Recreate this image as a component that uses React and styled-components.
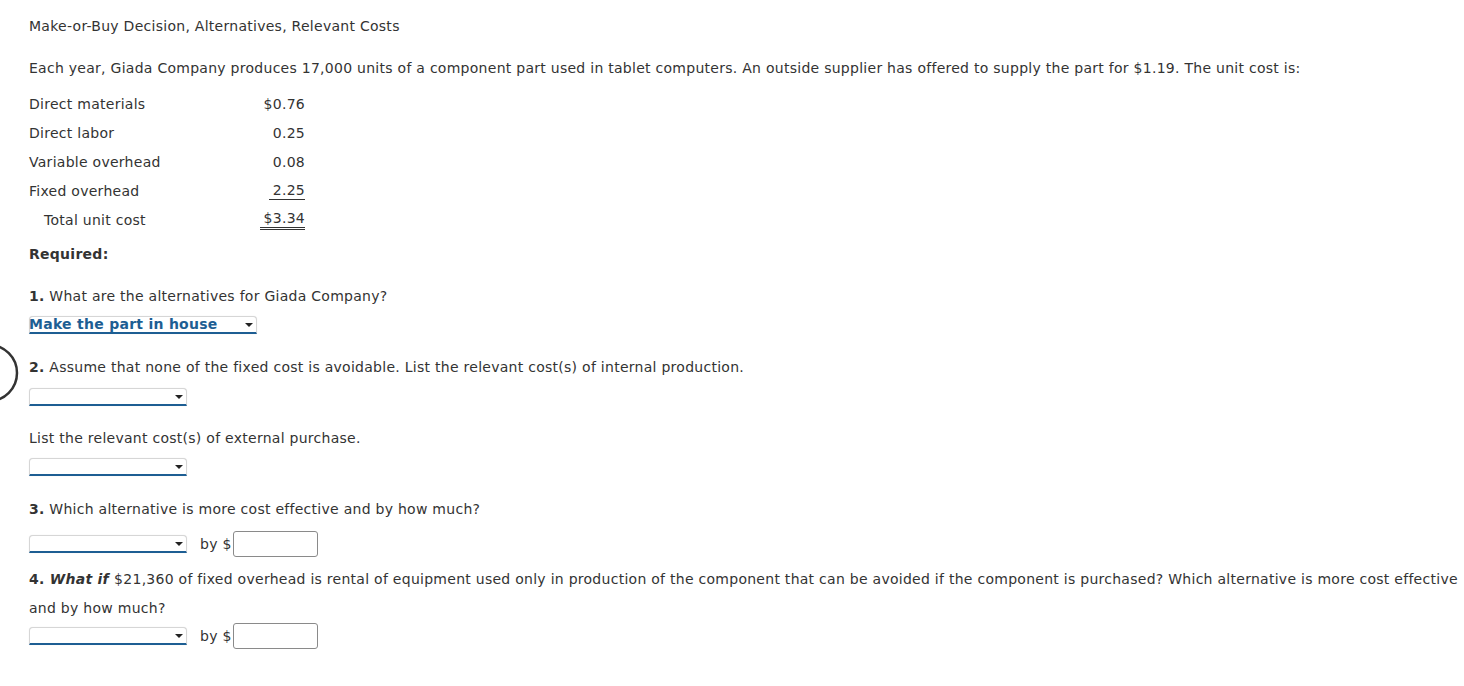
import { createGlobalStyle } from "styled-components";
import styled from "styled-components";

const GlobalStyle = createGlobalStyle`
  body {
    margin: 0;
    background: #fff;
    font-family: "DejaVu Sans", Verdana, sans-serif;
    font-size: 14px;
    letter-spacing: 0.27px;
    color: #333;
  }
`;

const costs = [
  { label: "Direct materials", amount: "$0.76" },
  { label: "Direct labor", amount: "0.25" },
  { label: "Variable overhead", amount: "0.08" },
  { label: "Fixed overhead", amount: "2.25", line: "single" },
  { label: "Total unit cost", amount: "$3.34", line: "double", indent: true },
];

const App = () => {
  return (
    <>
      <GlobalStyle />
      <Page>
        <CursorRing width="22" height="60" viewBox="0 0 22 60">
          <circle cx="-11" cy="28" r="28" fill="none" stroke="#333" strokeWidth="2.5" />
        </CursorRing>

        <Text>Make-or-Buy Decision, Alternatives, Relevant Costs</Text>
        <Text $top={13}>
          Each year, Giada Company produces 17,000 units of a component part used in tablet
          computers. An outside supplier has offered to supply the part for $1.19. The unit cost is:
        </Text>

        <CostTable>
          {costs.map((c) => (
            <CostRow key={c.label}>
              <CostLabel $indent={c.indent}>{c.label}</CostLabel>
              <CostCell>
                <Amount $line={c.line}>{c.amount}</Amount>
              </CostCell>
            </CostRow>
          ))}
        </CostTable>

        <Text $top={6}>
          <b>Required:</b>
        </Text>

        <Text $top={13}>
          <b>1.</b> What are the alternatives for Giada Company?
        </Text>
        <Dropdown $wide $top={5}>
          <DropValue>Make the part in house</DropValue>
          <Caret />
        </Dropdown>

        <Text $top={19}>
          <b>2.</b> Assume that none of the fixed cost is avoidable. List the relevant cost(s) of
          internal production.
        </Text>
        <Dropdown $top={6}>
          <DropValue />
          <Caret />
        </Dropdown>

        <Text $top={18}>List the relevant cost(s) of external purchase.</Text>
        <Dropdown $top={5}>
          <DropValue />
          <Caret />
        </Dropdown>

        <Text $top={19}>
          <b>3.</b> Which alternative is more cost effective and by how much?
        </Text>
        <AnswerRow $top={7}>
          <Dropdown>
            <DropValue />
            <Caret />
          </Dropdown>
          <By>by $</By>
          <AmountInput />
        </AnswerRow>

        <Text $top={8}>
          <b>
            4. <i>What if </i>
          </b>
          $21,360 of fixed overhead is rental of equipment used only in production of the component
          that can be avoided if the component is purchased? Which alternative is more cost effective
          and by how much?
        </Text>
        <AnswerRow $top={0}>
          <Dropdown>
            <DropValue />
            <Caret />
          </Dropdown>
          <By>by $</By>
          <AmountInput />
        </AnswerRow>
      </Page>
    </>
  );
};

export default App;

const Page = styled.div`
  position: relative;
  padding: 12px 0 30px 29px;
`;

const CursorRing = styled.svg`
  position: absolute;
  left: 0;
  top: 345px;
`;

const Text = styled.p`
  margin: ${(p) => p.$top || 0}px 0 0;
  line-height: 29px;
  b {
    font-weight: bold;
  }
`;

const CostTable = styled.div`
  margin-top: 6px;
  display: flex;
  flex-direction: column;
  width: 276px;
`;

const CostRow = styled.div`
  display: grid;
  grid-template-columns: 200px 76px;
  height: 29px;
  align-items: center;
`;

const CostLabel = styled.span`
  padding-left: ${(p) => (p.$indent ? 15 : 0)}px;
`;

const CostCell = styled.span`
  text-align: right;
`;

const Amount = styled.span`
  display: inline-block;
  line-height: 18px;
  padding-left: ${(p) => (p.$line ? 4 : 0)}px;
  border-bottom: ${(p) =>
    p.$line === "double" ? "3px double #333" : p.$line === "single" ? "1px solid #333" : "none"};
`;

const Dropdown = styled.div`
  margin-top: ${(p) => p.$top || 0}px;
  width: ${(p) => (p.$wide ? 228 : 158)}px;
  height: 18px;
  box-sizing: border-box;
  display: flex;
  align-items: center;
  background: #fff;
  border: 1px solid #d6d6d6;
  border-bottom: 2px solid #1d5e93;
  border-radius: 4px 4px 0 0;
  box-shadow: 0 0 1px rgba(0, 0, 0, 0.15);
`;

const DropValue = styled.span`
  flex: 1;
  margin-left: -1px;
  color: #1d5e93;
  font-weight: bold;
  font-size: 14px;
  line-height: 15px;
  white-space: nowrap;
`;

const Caret = styled.span`
  width: 0;
  height: 0;
  margin-right: 3px;
  border-left: 4px solid transparent;
  border-right: 4px solid transparent;
  border-top: 4px solid #222;
`;

const AnswerRow = styled.div`
  margin-top: ${(p) => p.$top || 0}px;
  display: flex;
  align-items: center;
`;

const By = styled.span`
  margin-left: 13px;
`;

const AmountInput = styled.div`
  width: 85px;
  height: 26px;
  box-sizing: border-box;
  border: 1px solid #8a8a8a;
  border-radius: 3px;
  background: #fff;
  margin-left: 1px;
`;
